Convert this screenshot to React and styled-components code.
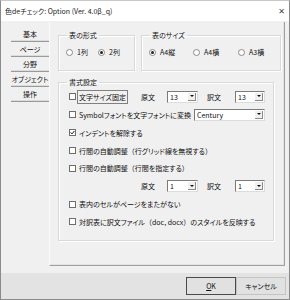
import React from 'react';
import styled, { createGlobalStyle } from 'styled-components';

const Global = createGlobalStyle`
html, body {
    margin: 0;
    padding: 0;
    background: #f0f0f0;
}
body {
    font-family: "Noto Sans CJK JP", "DejaVu Sans", sans-serif;
    font-feature-settings: "palt";
    color: #111;
}
`;

const Window = styled.div`
width: 290px;
height: 300px;
box-sizing: border-box;
border: 1px solid #8a8a8a;
border-top-color: #c8c8c8;
display: flex;
flex-direction: column;
background: #f0f0f0;
overflow: hidden;
`;
const TitleBar = styled.div`
height: 20px;
flex: none;
background: #fff;
display: flex;
align-items: center;
justify-content: space-between;
padding: 0 4px 0 4px;
font-size: 7px;
color: #222;
`;
const Close = styled.span`
font-family: "DejaVu Sans", sans-serif;
font-size: 8px;
color: #444;
`;
const Body = styled.div`
flex: 1;
display: flex;
padding: 1px 4px 0 10px;
`;
const Tabs = styled.div`
width: 38px;
flex: none;
display: flex;
flex-direction: column;
padding-top: 5px;
`;
const Tab = styled.div`
height: 15px;
box-sizing: border-box;
display: flex;
align-items: center;
justify-content: center;
font-size: 7px;
border-bottom: 1px solid #9a9a9a;
box-shadow: inset 0 -1px 0 #dcdcdc;
`;
const Panel = styled.div`
flex: none;
width: 236px;
height: 244px;
box-sizing: border-box;
border-left: 1px solid #fbfbfb;
border-right: 1px solid #a0a0a0;
border-bottom: 1px solid #a0a0a0;
box-shadow: inset -1px -1px 0 #e3e3e3;
padding: 9px 9px 0 8px;
display: flex;
flex-direction: column;
gap: 7px;
`;
const TopRow = styled.div`
display: flex;
gap: 6px;
`;
const Group = styled.fieldset`
margin: 0;
box-sizing: border-box;
width: ${p => p.$w}px;
height: ${p => p.$h}px;
border: 1px solid #d9d9d9;
box-shadow: inset 1px 1px 0 #fff, 1px 1px 0 #fff;
padding: ${p => p.$pad || '0 6px'};
display: flex;
flex-direction: column;
`;
const Legend = styled.legend`
font-size: 7px;
padding: 0 2px;
margin-left: 2px;
line-height: 9px;
`;
const RadioRow = styled.div`
display: flex;
align-items: center;
height: 24px;
padding-left: 1px;
`;
const RadioItem = styled.label`
display: flex;
align-items: center;
gap: 4px;
font-size: 7px;
width: ${p => p.$w}px;
flex: none;
`;
const RadioDot = styled.span`
width: 7px;
height: 7px;
box-sizing: border-box;
border-radius: 50%;
border: 1px solid #8a8a8a;
background: #fff;
display: flex;
align-items: center;
justify-content: center;
&::after {
    content: '';
    width: 3px;
    height: 3px;
    border-radius: 50%;
    background: ${p => (p.$on ? '#222' : 'transparent')};
}
`;
const Row = styled.div`
height: 17.86px;
display: flex;
align-items: center;
font-size: 7px;
padding-left: 4px;
`;
const Check = styled.span`
width: 7px;
height: 7px;
box-sizing: border-box;
border: 1px solid #6e6e6e;
background: #fff;
flex: none;
margin-right: 3px;
display: flex;
align-items: center;
justify-content: center;
`;
const Label = styled.span`
white-space: nowrap;
${p => p.$boxed && `
    border: 1px solid #808080;
    padding: 1px 1px;
    margin-left: -2px;
`}
`;
const Wide = styled.span`
font-feature-settings: normal;
`;
const Controls = styled.div`
margin-left: auto;
display: flex;
align-items: center;
`;
const CtrlLabel = styled.span`
width: ${p => p.$w}px;
flex: none;
`;
const Select = styled.div`
width: ${p => p.$w}px;
height: 12px;
box-sizing: border-box;
background: #fff;
border: 1px solid #7a7a7a;
border-right-color: #dcdcdc;
border-bottom-color: #dcdcdc;
display: flex;
align-items: center;
font-size: 7px;
padding-left: 2px;
margin-right: ${p => p.$mr || 0}px;
`;
const SelValue = styled.span`
flex: 1;
`;
const Arrow = styled.span`
width: 8px;
height: 8px;
margin-right: 1px;
background: #f0f0f0;
border-right: 1px solid #8a8a8a;
border-bottom: 1px solid #8a8a8a;
box-sizing: border-box;
display: flex;
align-items: center;
justify-content: center;
&::after {
    content: '';
    border-left: 2px solid transparent;
    border-right: 2px solid transparent;
    border-top: 2px solid #111;
}
`;
const Footer = styled.div`
height: 26px;
flex: none;
background: #e3e3e3;
display: flex;
align-items: center;
justify-content: flex-end;
padding-right: 3px;
margin-top: 7px;
`;
const Button = styled.button`
width: 50px;
height: 18px;
box-sizing: border-box;
background: #e1e1e1;
border: 1px solid ${p => (p.$default ? '#4a4a4a' : '#c4c4c4')};
font-family: "Noto Sans CJK JP", "DejaVu Sans", sans-serif;
font-feature-settings: "palt";
font-size: 7px;
color: #111;
padding: 0;
margin: 0;
`;

const Checkbox = ({ checked }) => (
    <Check>
        {checked && (
            <svg width="5" height="5" viewBox="0 0 5 5">
                <path d="M0.6 2.4 L2 3.9 L4.4 1" stroke="#111" strokeWidth="1" fill="none" />
            </svg>
        )}
    </Check>
);

const SizePair = ({ a, b }) => (
    <Controls>
        <CtrlLabel $w={26}>原文</CtrlLabel>
        <Select $w={31} $mr={9}><SelValue>{a}</SelValue><Arrow /></Select>
        <CtrlLabel $w={28}>訳文</CtrlLabel>
        <Select $w={30}><SelValue>{b}</SelValue><Arrow /></Select>
    </Controls>
);

export default function App() {
    return (
        <>
            <Global />
            <Window>
                <TitleBar>
                    <span>色deチェック: Option (Ver. 4.0β_q)</span>
                    <Close>✕</Close>
                </TitleBar>
                <Body>
                    <Tabs>
                        <Tab>基本</Tab>
                        <Tab>ページ</Tab>
                        <Tab>分野</Tab>
                        <Tab>オブジェクト</Tab>
                        <Tab>操作</Tab>
                    </Tabs>
                    <Panel>
                        <TopRow>
                            <Group $w={72} $h={40}>
                                <Legend>表の形式</Legend>
                                <RadioRow>
                                    <RadioItem $w={32}><RadioDot />1列</RadioItem>
                                    <RadioItem $w={30}><RadioDot $on />2列</RadioItem>
                                </RadioRow>
                            </Group>
                            <Group $w={139} $h={40}>
                                <Legend>表のサイズ</Legend>
                                <RadioRow>
                                    <RadioItem $w={44}><RadioDot $on />A4縦</RadioItem>
                                    <RadioItem $w={45}><RadioDot />A4横</RadioItem>
                                    <RadioItem $w={36}><RadioDot />A3横</RadioItem>
                                </RadioRow>
                            </Group>
                        </TopRow>
                        <Group $w={216} $h={163} $pad="1px 8px 0 6px">
                            <Legend>書式設定</Legend>
                            <Row>
                                <Checkbox />
                                <Label $boxed>文字サイズ固定</Label>
                                <SizePair a="13" b="13" />
                            </Row>
                            <Row>
                                <Checkbox />
                                <Label>Symbolフォントを文字フォントに変換</Label>
                                <Controls>
                                    <Select $w={71}><SelValue>Century</SelValue><Arrow /></Select>
                                </Controls>
                            </Row>
                            <Row>
                                <Checkbox checked />
                                <Label>インデントを解除する</Label>
                            </Row>
                            <Row>
                                <Checkbox />
                                <Label>行間の自動調整<Wide>（</Wide>行グリッド線を無視する<Wide>）</Wide></Label>
                            </Row>
                            <Row>
                                <Checkbox />
                                <Label>行間の自動調整<Wide>（</Wide>行間を指定する<Wide>）</Wide></Label>
                            </Row>
                            <Row>
                                <SizePair a="1" b="1" />
                            </Row>
                            <Row>
                                <Checkbox />
                                <Label>表内のセルがページをまたがない</Label>
                            </Row>
                            <Row>
                                <Checkbox />
                                <Label>対訳表に訳文ファイル<Wide>（</Wide>doc, docx<Wide>）</Wide>のスタイルを反映する</Label>
                            </Row>
                        </Group>
                    </Panel>
                </Body>
                <Footer>
                    <Button $default><u>O</u>K</Button>
                    <Button>キャンセル</Button>
                </Footer>
            </Window>
        </>
    );
}
